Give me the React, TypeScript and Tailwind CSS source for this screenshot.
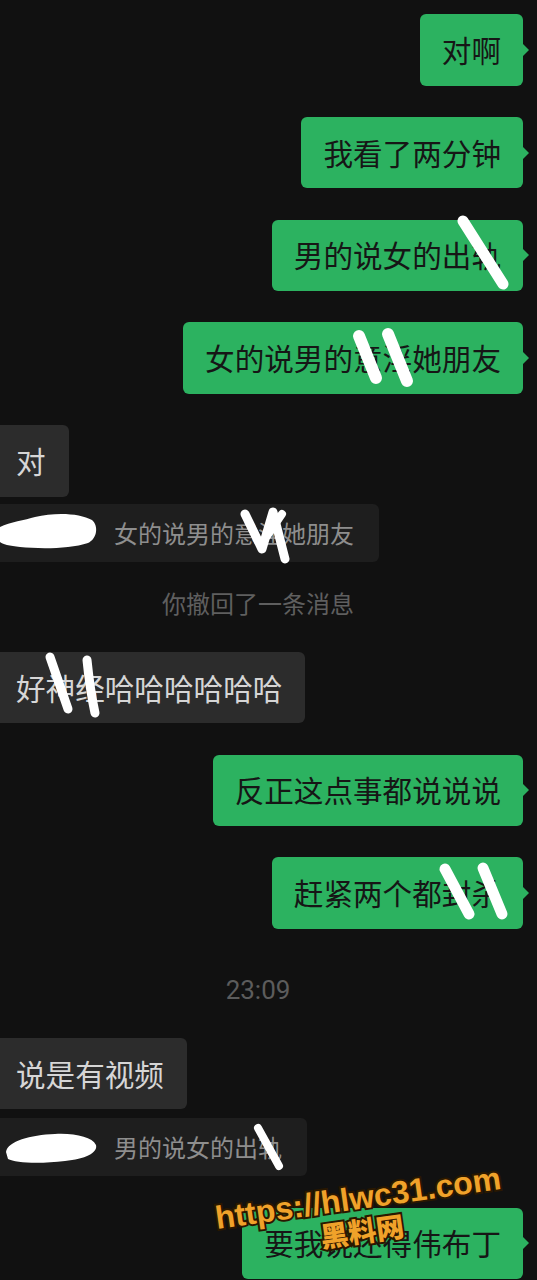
import React from "react";

const GREEN = "bg-[#2cb260]";

function Right({ text, first }: { text: string; first?: boolean }) {
  return (
    <div className={`flex justify-end pr-[14px] ${first ? "mt-[14px]" : "mt-[31.25px]"}`}>
      <div className={`relative flex h-[71.5px] items-center rounded-[6px] ${GREEN} px-[22px] text-[29.6px] leading-none text-[#161616]`}>
        {text}
        <span className="absolute right-[-6px] top-1/2 h-0 w-0 -translate-y-1/2 border-y-[6px] border-l-[6px] border-y-transparent border-l-[#2cb260]" />
      </div>
    </div>
  );
}

function Left({ text, mt }: { text: string; mt: string }) {
  return (
    <div className={`flex justify-start ${mt}`}>
      <div className="flex h-[71.5px] items-center rounded-r-[6px] bg-[#2c2c2c] pl-[16px] pr-[23px] text-[29.6px] leading-none text-[#d6d6d6]">
        {text}
      </div>
    </div>
  );
}

function Quote({ text, mt }: { text: string; mt: string }) {
  return (
    <div className={`flex justify-start ${mt}`}>
      <div className="flex h-[58px] items-center rounded-r-[6px] bg-[#1e1e1e] pl-[114px] pr-[25px] text-[24px] leading-none text-[#8e8e8e]">
        {text}
      </div>
    </div>
  );
}

export default function App() {
  return (
    <div
      className="relative h-[1280px] w-[537px] overflow-hidden bg-[#111111]"
      style={{ fontFamily: '"Noto Sans CJK SC", "Noto Sans", sans-serif' }}
    >
      <div className="flex flex-col">
        <Right text="对啊" first />
        <Right text="我看了两分钟" />
        <Right text="男的说女的出轨" />
        <Right text="女的说男的意淫她朋友" />
        <Left text="对" mt="mt-[31.5px]" />
        <Quote text="女的说男的意淫她朋友" mt="mt-[7px]" />
        <div className="flex h-[82px] items-center justify-center pr-[21px] text-[24px] leading-none text-[#5f5f5f]">
          你撤回了一条消息
        </div>
        <Left text="好神经哈哈哈哈哈哈" mt="mt-[8px]" />
        <Right text="反正这点事都说说说" />
        <Right text="赶紧两个都封杀" />
        <div
          className="mt-[37px] flex h-[48px] items-center justify-center pr-[21px] text-[26px] leading-none text-[#5c5c5c]"
          style={{ fontFamily: 'Roboto, "Liberation Sans", sans-serif' }}
        >
          23:09
        </div>
        <Left text="说是有视频" mt="mt-[24px]" />
        <Quote text="男的说女的出轨" mt="mt-[9px]" />
        <Right text="要我说还得伟布丁" />
      </div>

      {/* white scribbles drawn over the screenshot */}
      <svg
        className="pointer-events-none absolute left-0 top-0"
        width="537"
        height="1280"
        viewBox="0 0 537 1280"
        fill="none"
      >
        <g stroke="#ffffff" strokeLinecap="round" strokeLinejoin="round">
          <path d="M463 221 L503 284" strokeWidth="11" />
          <path d="M359 336 L376 378" strokeWidth="12" />
          <path d="M388 334 L407 381" strokeWidth="12" />
          <path d="M245 514 L262 549 L273 512 L285 559" strokeWidth="9" />
          <path d="M282 514 L267 536" strokeWidth="8" />
          <path d="M50 657 L68 709" strokeWidth="9" />
          <path d="M87 660 Q90 690 95 713" strokeWidth="9" />
          <path d="M445 869 L469 914" strokeWidth="11" />
          <path d="M483 868 L502 914" strokeWidth="11" />
          <path d="M258 1128 L279 1166" strokeWidth="8" />
        </g>
        <path
          d="M0 527 C10 522 25 520 35 517 C55 512 80 513 92 520 C99 526 97 539 88 543 C70 549 40 549 20 547 C10 546 2 544 0 542 Z"
          fill="#ffffff"
        />
        <path
          d="M6 1152 C8 1141 30 1135 55 1134 C75 1133 92 1137 96 1145 C98 1153 85 1159 65 1161 C40 1164 15 1163 8 1159 Z"
          fill="#ffffff"
        />
      </svg>

      {/* watermark */}
      <div
        className="pointer-events-none absolute left-[358px] top-[1198px] -translate-x-1/2 -translate-y-1/2 rotate-[-8deg] whitespace-nowrap text-[32px] font-bold leading-none text-[#f0a22a] [-webkit-text-stroke:4px_#2a1800] [paint-order:stroke_fill]"
        style={{ fontFamily: '"Liberation Sans", Arial, sans-serif' }}
      >
        https://hlwc31.com
      </div>
      <div className="pointer-events-none absolute left-[362px] top-[1230px] -translate-x-1/2 -translate-y-1/2 rotate-[-8deg] whitespace-nowrap text-[28px] font-black leading-none text-[#f0a22a] [-webkit-text-stroke:4px_#2a1800] [paint-order:stroke_fill]">
        黑料网
      </div>
    </div>
  );
}
